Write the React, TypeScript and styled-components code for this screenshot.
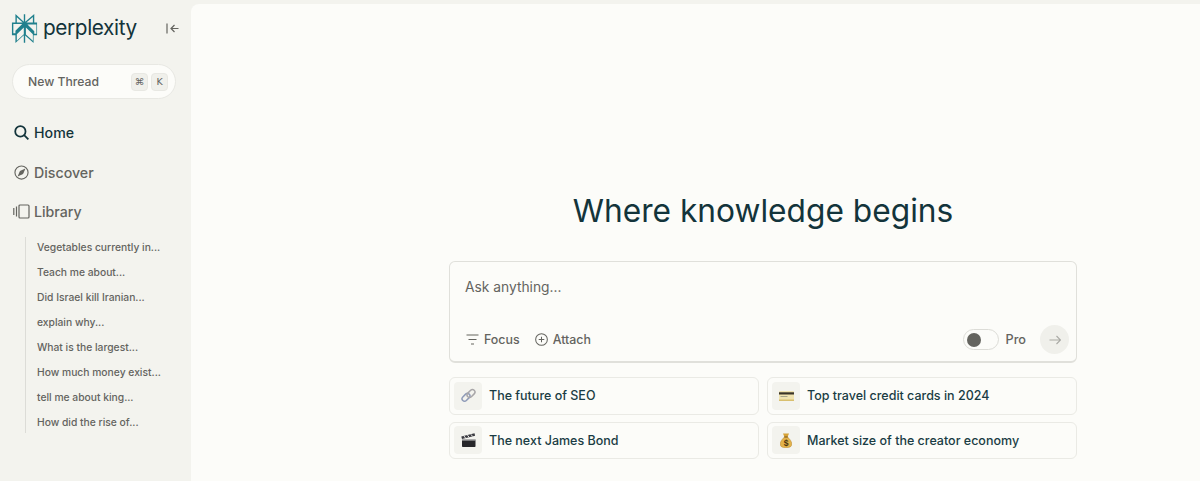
import styled, { createGlobalStyle } from "styled-components";
import { ReactNode } from "react";

const threads = [
  "Vegetables currently in...",
  "Teach me about...",
  "Did Israel kill Iranian...",
  "explain why...",
  "What is the largest...",
  "How much money exist...",
  "tell me about king...",
  "How did the rise of...",
];

function LogoMark() {
  return (
    <svg width="29" height="29" viewBox="0 0 24 24" fill="#20808d">
      <path d="M22.398 7.09h-2.31V.068l-7.51 6.354V.158h-1.156v6.196L4.49 0v7.09H1.602v10.397H4.49V24l6.933-6.36v6.201h1.155v-6.047l6.932 6.181v-6.488h2.888V7.09zm-3.466-4.531v4.53h-5.355l5.355-4.53zm-13.286.067l4.869 4.464h-4.87V2.626zm-2.888 5.62h7.35l-5.617 5.6v2.14H2.758V8.245zM5.646 22.16v-5.32l5.778-5.76v5.6l-5.778 5.48zm13.29.005l-5.778-5.15V11.08l5.778 5.76v5.325zm2.887-5.826h-1.733v-2.14l-5.617-5.6h7.35v7.74z" />
    </svg>
  );
}

function CollapseIcon() {
  return (
    <svg width="13" height="11" viewBox="0 0 13 11" fill="none" stroke="#64645f" strokeWidth="1.2">
      <path d="M1 0.500v10M12.500 5.500H5M8.500 2L5 5.500 8.500 9" />
    </svg>
  );
}

function SearchIcon() {
  return (
    <svg width="15" height="15" viewBox="0 0 16 16" fill="none" stroke="#13343b" strokeWidth="1.9">
      <circle cx="6.800" cy="6.800" r="5.500" />
      <path d="M10.800 10.800L15.300 15.300" />
    </svg>
  );
}

function CompassIcon() {
  return (
    <svg width="15" height="15" viewBox="0 0 16 16" fill="none" stroke="#64645f" strokeWidth="1.2">
      <circle cx="8" cy="8" r="7" />
      <path d="M11 5L9.200 9.200 5 11l1.800-4.200z" fill="#64645f" />
    </svg>
  );
}

function LibraryIcon() {
  return (
    <svg width="17" height="15" viewBox="0 0 17 15" fill="none" stroke="#64645f" strokeWidth="1.2">
      <path d="M0.800 4v7M3.500 2.500v10" />
      <rect x="6" y="1" width="10" height="13" rx="1" />
    </svg>
  );
}

function FocusIcon() {
  return (
    <svg width="13" height="11" viewBox="0 0 13 11" fill="none" stroke="#64645f" strokeWidth="1.2">
      <path d="M0.500 1h12M2.500 5.500h8M5 10h3" />
    </svg>
  );
}

function AttachIcon() {
  return (
    <svg width="13" height="13" viewBox="0 0 14 14" fill="none" stroke="#64645f" strokeWidth="1.100">
      <circle cx="7" cy="7" r="6.300" />
      <path d="M7 4v6M4 7h6" />
    </svg>
  );
}

function ArrowIcon() {
  return (
    <svg width="12" height="10" viewBox="0 0 12 10" fill="none" stroke="#a9a9a4" strokeWidth="1.100">
      <path d="M0.500 5h11M7.500 1l4 4-4 4" />
    </svg>
  );
}

function LinkEmoji() {
  return (
    <svg width="15" height="15" viewBox="0 0 15 15" fill="none">
      <rect x="0.500" y="6.800" width="9" height="5" rx="2.500" transform="rotate(-45 5 9.300)" stroke="#8f9bb8" strokeWidth="1.500" />
      <rect x="5.500" y="3" width="9" height="5" rx="2.500" transform="rotate(-45 10 5.500)" stroke="#a8a6a8" strokeWidth="1.500" />
    </svg>
  );
}

function CardEmoji() {
  return (
    <svg width="15" height="10" viewBox="0 0 15 10">
      <rect width="15" height="10" rx="1" fill="#f0e3b0" />
      <rect y="1.300" width="15" height="2.200" fill="#3a3428" />
      <rect x="1.500" y="5" width="7" height="1" fill="#a8a489" />
      <rect y="8.500" width="15" height="1.500" fill="#d8bf6e" />
    </svg>
  );
}

function ClapperEmoji() {
  return (
    <svg width="15" height="14" viewBox="0 0 15 14">
      <path d="M1 6.500h13.500v6.700a.8.8 0 0 1-.8.8H1.800a.8.8 0 0 1-.8-.8z" fill="#26262a" />
      <path d="M0.300 3.500L13.500 0.300l0.600 2.400L1 5.900z" fill="#3a3a40" />
      <path d="M3 3l1.500 2M6.500 2.200L8 4.200M10 1.400l1.500 2" stroke="#e8e8e8" strokeWidth="1" />
      <path d="M1 6.500h13.500v1H1z" fill="#cfcfcf" />
    </svg>
  );
}

function MoneyEmoji() {
  return (
    <svg width="12" height="15" viewBox="0 0 12 15">
      <path d="M3 0.500h6L7.500 4h-3z" fill="#d6a237" />
      <path d="M4.500 4h3C9.500 5.500 11.800 8.500 11.800 11c0 2.800-2.300 3.800-5.800 3.800S0.200 13.800 0.200 11C0.200 8.500 2.500 5.500 4.500 4z" fill="#e3b24a" stroke="#a87a22" strokeWidth="0.400" />
      <path d="M4.200 4h3.600" stroke="#7a5518" strokeWidth="0.900" />
      <text x="6" y="13" fontSize="8.500" fontWeight="700" fontFamily="Liberation Sans, sans-serif" textAnchor="middle" fill="#4a3410">$</text>
    </svg>
  );
}

const suggestions: { icon: ReactNode; label: string }[] = [
  { icon: <LinkEmoji />, label: "The future of SEO" },
  { icon: <CardEmoji />, label: "Top travel credit cards in 2024" },
  { icon: <ClapperEmoji />, label: "The next James Bond" },
  { icon: <MoneyEmoji />, label: "Market size of the creator economy" },
];

export default function App() {
  return (
    <Page>
      <GlobalStyle />
      <Sidebar>
        <LogoRow>
          <Brand>
            <LogoMark />
            <BrandName>perplexity</BrandName>
          </Brand>
          <CollapseIcon />
        </LogoRow>
        <NewThread>
          <span>New Thread</span>
          <Keys>
            <Key>⌘</Key>
            <Key>K</Key>
          </Keys>
        </NewThread>
        <Nav>
          <NavItem $active>
            <NavIcon $inset={2}>
              <SearchIcon />
            </NavIcon>
            Home
          </NavItem>
          <NavItem>
            <NavIcon $inset={2}>
              <CompassIcon />
            </NavIcon>
            Discover
          </NavItem>
          <NavItem>
            <NavIcon $inset={1}>
              <LibraryIcon />
            </NavIcon>
            Library
          </NavItem>
        </Nav>
        <ThreadList>
          {threads.map((thread) => (
            <ThreadItem key={thread}>{thread}</ThreadItem>
          ))}
        </ThreadList>
      </Sidebar>
      <Main>
        <Heading>Where knowledge begins</Heading>
        <AskBox>
          <Placeholder>Ask anything...</Placeholder>
          <AskFooter>
            <AskTools>
              <Tool>
                <FocusIcon />
                Focus
              </Tool>
              <Tool>
                <AttachIcon />
                Attach
              </Tool>
            </AskTools>
            <AskActions>
              <Toggle>
                <Knob />
              </Toggle>
              <ProLabel>Pro</ProLabel>
              <Submit>
                <ArrowIcon />
              </Submit>
            </AskActions>
          </AskFooter>
        </AskBox>
        <Suggestions>
          {suggestions.map((item) => (
            <Suggestion key={item.label}>
              <EmojiTile>{item.icon}</EmojiTile>
              {item.label}
            </Suggestion>
          ))}
        </Suggestions>
      </Main>
    </Page>
  );
}

const GlobalStyle = createGlobalStyle`
  html, body {
    margin: 0;
    height: 481px;
    overflow: hidden;
  }
  body {
    font-family: Inter, "Liberation Sans", sans-serif;
    background: #f3f3ee;
  }
`;

const Page = styled.div`
  display: flex;
  width: 1200px;
  height: 481px;
`;

const Sidebar = styled.aside`
  width: 191px;
  flex-shrink: 0;
  display: flex;
  flex-direction: column;
  padding: 14px 15px 0 12px;
  box-sizing: border-box;
`;

const LogoRow = styled.div`
  display: flex;
  align-items: center;
  justify-content: space-between;
  height: 29px;
  margin: 0 -3px 0 -2px;
`;

const Brand = styled.div`
  display: flex;
  align-items: center;
  gap: 4px;
`;

const BrandName = styled.span`
  font-size: 20.8px;
  color: #13343b;
  letter-spacing: -0.4px;
  position: relative;
  top: -1px;
`;

const NewThread = styled.div`
  margin-top: 21px;
  height: 33px;
  display: flex;
  align-items: center;
  justify-content: space-between;
  padding: 0 7px 0 15px;
  background: #fcfcf9;
  border: 1px solid #e8e8e3;
  border-radius: 18px;
  font-size: 12.2px;
  font-weight: 500;
  color: #64645f;
`;

const Keys = styled.div`
  display: flex;
  gap: 3px;
`;

const Key = styled.span`
  width: 17px;
  height: 18px;
  box-sizing: border-box;
  display: flex;
  align-items: center;
  justify-content: center;
  background: #f0f0eb;
  border: 1px solid #e8e8e3;
  border-radius: 4px;
  font-size: 9.500px;
  color: #64645f;
  font-family: "DejaVu Sans", sans-serif;
`;

const Nav = styled.nav`
  margin-top: 14px;
  display: flex;
  flex-direction: column;
`;

const NavItem = styled.div<{ $active?: boolean }>`
  display: flex;
  align-items: center;
  height: 39.5px;
  font-size: 14.2px;
  font-weight: 500;
  color: ${(p) => (p.$active ? "#13343b" : "#64645f")};
`;

const NavIcon = styled.span<{ $inset: number }>`
  width: 22px;
  display: flex;
  align-items: center;
  padding-left: ${(p) => p.$inset}px;
  box-sizing: border-box;
`;

const ThreadList = styled.div`
  margin: 5px 0 0 13px;
  padding: 0 0 0 11px;
  height: 196px;
  border-left: 1px solid #dcdcd7;
  display: flex;
  flex-direction: column;
  justify-content: center;
`;

const ThreadItem = styled.div`
  height: 25px;
  flex-shrink: 0;
  display: flex;
  align-items: center;
  font-size: 10.3px;
  font-weight: 500;
  color: #64645f;
  white-space: nowrap;
`;

const Main = styled.main`
  flex: 1;
  margin-top: 4px;
  background: #fcfcf9;
  border-radius: 8px 0 0 0;
  display: flex;
  flex-direction: column;
  align-items: center;
  padding: 183.500px 0 0 135px;
  box-sizing: border-box;
`;

const Heading = styled.h1`
  margin: 0;
  font-size: 31.700px;
  line-height: 46px;
  font-weight: 400;
  color: #13343b;
`;

const AskBox = styled.div`
  margin-top: 27.500px;
  width: 628px;
  height: 102px;
  box-sizing: border-box;
  border: 1px solid #e0e0db;
  border-bottom-width: 2px;
  border-radius: 6px;
  padding: 16px 7px 7px 15px;
  display: flex;
  flex-direction: column;
  justify-content: space-between;
`;

const Placeholder = styled.div`
  font-size: 13.8px;
  line-height: 18px;
  color: #64645f;
`;

const AskFooter = styled.div`
  display: flex;
  align-items: center;
  justify-content: space-between;
`;

const AskTools = styled.div`
  display: flex;
  gap: 14px;
`;

const Tool = styled.div`
  display: flex;
  align-items: center;
  gap: 5px;
  font-size: 12.4px;
  font-weight: 500;
  color: #64645f;
  padding-left: 1px;
`;

const AskActions = styled.div`
  display: flex;
  align-items: center;
`;

const Toggle = styled.div`
  width: 36px;
  height: 21px;
  box-sizing: border-box;
  border: 1px solid #dcdcd7;
  border-radius: 11px;
  display: flex;
  align-items: center;
  padding-left: 3px;
`;

const Knob = styled.span`
  width: 14px;
  height: 14px;
  border-radius: 50%;
  background: #64645f;
`;

const ProLabel = styled.span`
  margin-left: 7px;
  font-size: 12.7px;
  font-weight: 500;
  color: #64645f;
`;

const Submit = styled.div`
  margin-left: 14px;
  width: 29px;
  height: 29px;
  border-radius: 50%;
  background: #f0f0eb;
  display: flex;
  align-items: center;
  justify-content: center;
`;

const Suggestions = styled.div`
  margin-top: 14px;
  width: 628px;
  display: grid;
  grid-template-columns: 310px 310px;
  column-gap: 8px;
  row-gap: 7px;
`;

const Suggestion = styled.div`
  height: 37.500px;
  box-sizing: border-box;
  border: 1px solid #eaeae5;
  border-radius: 6px;
  padding: 0 4px;
  display: flex;
  align-items: center;
  gap: 7px;
  font-size: 12.5px;
  font-weight: 500;
  color: #1a3c44;
`;

const EmojiTile = styled.span`
  width: 28px;
  height: 28px;
  border-radius: 4px;
  background: #f3f3ee;
  display: flex;
  align-items: center;
  justify-content: center;
`;
